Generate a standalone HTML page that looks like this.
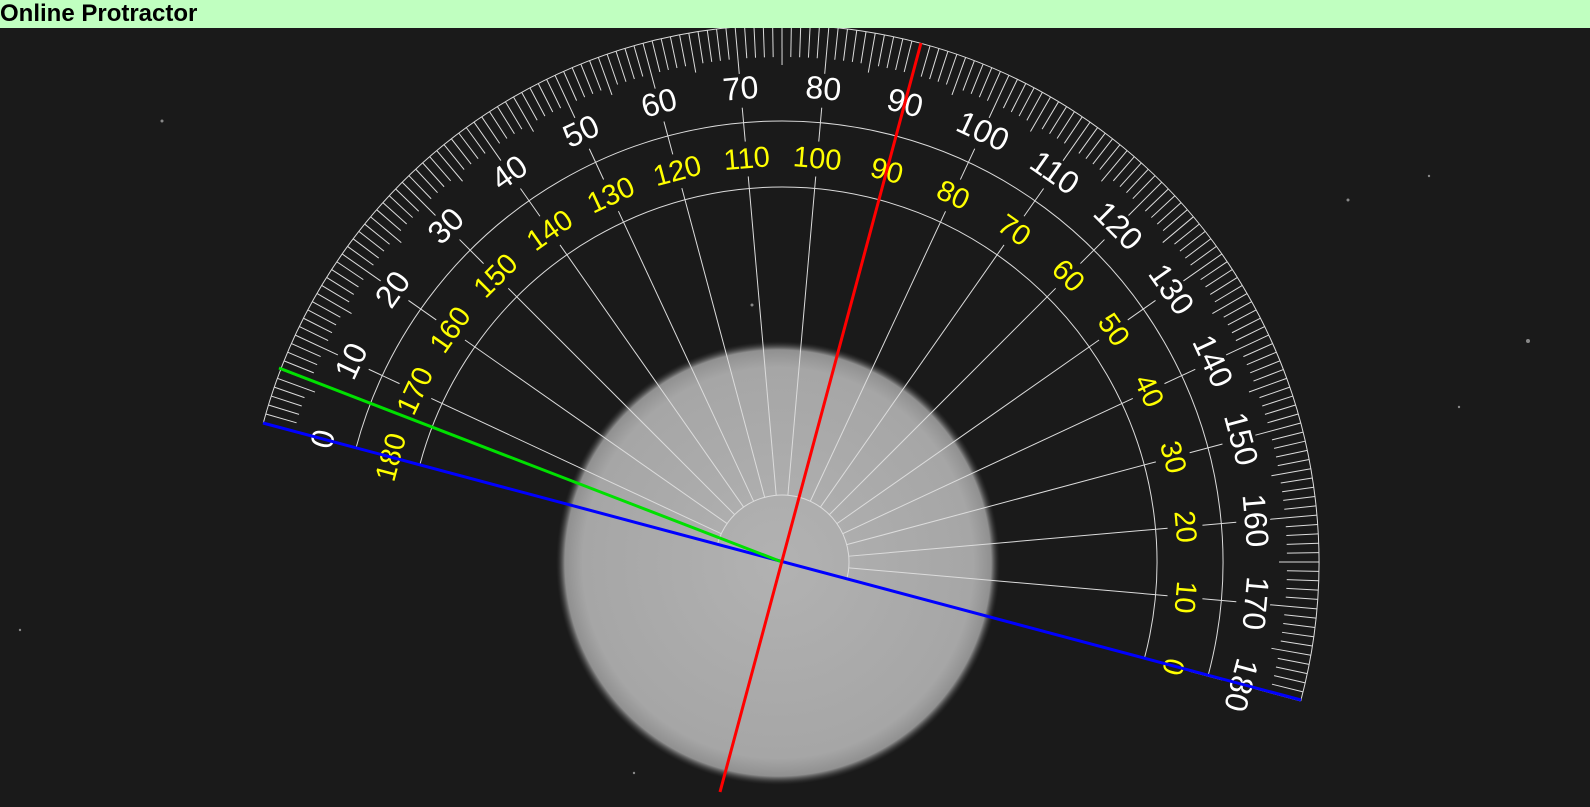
<!DOCTYPE html>
<html><head><meta charset="utf-8"><style>
html,body{margin:0;padding:0;width:1590px;height:807px;overflow:hidden;background:#1a1a1a}
#hd{position:absolute;left:0;top:0;width:1590px;height:28px;background:#c0ffc0;font:bold 24px "Liberation Sans",sans-serif;line-height:28px;color:#000}
svg{position:absolute;left:0;top:0}
.w{fill:#fff;font:32px "Liberation Sans",sans-serif}
.y{fill:#ff0;font:29px "Liberation Sans",sans-serif}
</style></head><body>
<svg width="1590" height="807" viewBox="0 0 1590 807">
<defs><radialGradient id="sun" cx="0.5" cy="0.5" r="0.5">
<stop offset="0" stop-color="#b2b2b2"/><stop offset="0.88" stop-color="#a6a6a6"/><stop offset="0.96" stop-color="#909090"/><stop offset="1" stop-color="#333" stop-opacity="0"/></radialGradient></defs>
<rect width="1590" height="807" fill="#1a1a1a"/>
<circle cx="778" cy="563" r="222" fill="url(#sun)"/>
<g fill="#888"><circle cx="1528" cy="341" r="2"/><circle cx="162" cy="121" r="1.5"/><circle cx="1348" cy="200" r="1.5"/><circle cx="752" cy="305" r="1.5"/><circle cx="1459" cy="407" r="1.2"/><circle cx="1429" cy="176" r="1.2"/><circle cx="634" cy="773" r="1.2"/><circle cx="20" cy="630" r="1.2"/></g>
<g id="p" transform="translate(782,562) rotate(15)" stroke="#dcdcdc" fill="none" stroke-width="1">
<path d="M-537 0A537 537 0 0 1 537 0"/>
<path d="M-441 0A441 441 0 0 1 441 0"/>
<path d="M-375 0A375 375 0 0 1 375 0"/>
<path d="M-67 0A67 67 0 0 1 67 0"/>
<g id="ticks"></g>
<g stroke="none" text-anchor="middle" dominant-baseline="middle">
<text class="w" transform="rotate(-90) translate(0,-473)">0</text>
<text class="w" transform="rotate(-80) translate(0,-473)">10</text>
<text class="w" transform="rotate(-70) translate(0,-473)">20</text>
<text class="w" transform="rotate(-60) translate(0,-473)">30</text>
<text class="w" transform="rotate(-50) translate(0,-473)">40</text>
<text class="w" transform="rotate(-40) translate(0,-473)">50</text>
<text class="w" transform="rotate(-30) translate(0,-473)">60</text>
<text class="w" transform="rotate(-20) translate(0,-473)">70</text>
<text class="w" transform="rotate(-10) translate(0,-473)">80</text>
<text class="w" transform="rotate(0) translate(0,-473)">90</text>
<text class="w" transform="rotate(10) translate(0,-473)">100</text>
<text class="w" transform="rotate(20) translate(0,-473)">110</text>
<text class="w" transform="rotate(30) translate(0,-473)">120</text>
<text class="w" transform="rotate(40) translate(0,-473)">130</text>
<text class="w" transform="rotate(50) translate(0,-473)">140</text>
<text class="w" transform="rotate(60) translate(0,-473)">150</text>
<text class="w" transform="rotate(70) translate(0,-473)">160</text>
<text class="w" transform="rotate(80) translate(0,-473)">170</text>
<text class="w" transform="rotate(90) translate(0,-473)">180</text>
<text class="y" transform="rotate(-90) translate(0,-403)">180</text>
<text class="y" transform="rotate(-80) translate(0,-403)">170</text>
<text class="y" transform="rotate(-70) translate(0,-403)">160</text>
<text class="y" transform="rotate(-60) translate(0,-403)">150</text>
<text class="y" transform="rotate(-50) translate(0,-403)">140</text>
<text class="y" transform="rotate(-40) translate(0,-403)">130</text>
<text class="y" transform="rotate(-30) translate(0,-403)">120</text>
<text class="y" transform="rotate(-20) translate(0,-403)">110</text>
<text class="y" transform="rotate(-10) translate(0,-403)">100</text>
<text class="y" transform="rotate(0) translate(0,-403)">90</text>
<text class="y" transform="rotate(10) translate(0,-403)">80</text>
<text class="y" transform="rotate(20) translate(0,-403)">70</text>
<text class="y" transform="rotate(30) translate(0,-403)">60</text>
<text class="y" transform="rotate(40) translate(0,-403)">50</text>
<text class="y" transform="rotate(50) translate(0,-403)">40</text>
<text class="y" transform="rotate(60) translate(0,-403)">30</text>
<text class="y" transform="rotate(70) translate(0,-403)">20</text>
<text class="y" transform="rotate(80) translate(0,-403)">10</text>
<text class="y" transform="rotate(90) translate(0,-403)">0</text>
</g>
</g>
<line x1="263" y1="423" x2="1301" y2="700" stroke="#0000ff" stroke-width="3"/>
<line x1="782" y1="562" x2="279" y2="368" stroke="#00e000" stroke-width="3"/>
<line x1="921" y1="43" x2="720" y2="792" stroke="#ff0000" stroke-width="3"/>
</svg>
<div id="hd">Online Protractor</div>
<script>
(function(){
var g=document.getElementById('ticks'),s='';
function ln(a,r1,r2){var t=a*Math.PI/180,c=-Math.cos(t),n=-Math.sin(t);
s+='<line x1="'+(c*r1).toFixed(1)+'" y1="'+(n*r1).toFixed(1)+'" x2="'+(c*r2).toFixed(1)+'" y2="'+(n*r2).toFixed(1)+'"/>';}
for(var a=0;a<=180;a++){var r2=a%10==0?490:(a%5==0?497:505);ln(a,537,r2);}
for(var a=0;a<=180;a+=10){ln(a,422,456);if(a>0&&a<180)ln(a,67,387);}
g.innerHTML=s;
})();
</script>
</body></html>
